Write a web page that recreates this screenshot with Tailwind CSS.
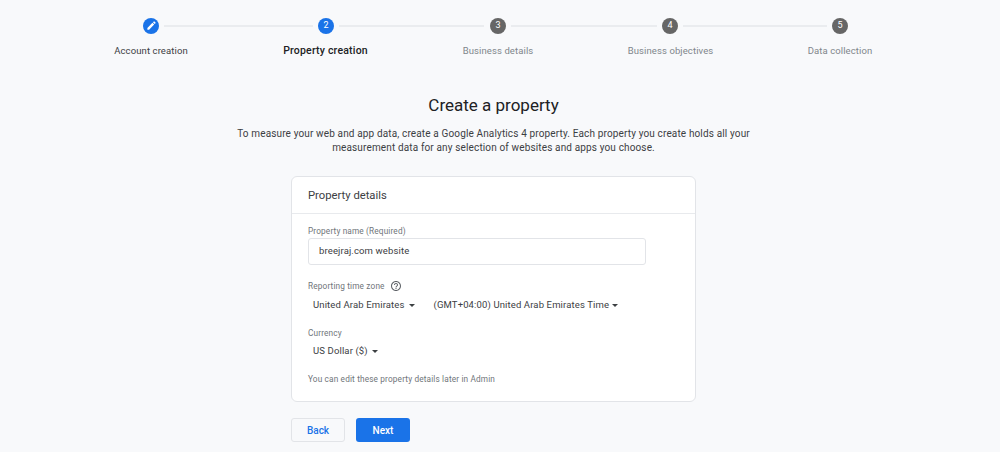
<!DOCTYPE html>
<html lang="en">
<head>
  <meta charset="UTF-8">
  <script src="https://cdn.jsdelivr.net/npm/@tailwindcss/browser@4"></script>
  <title>Create a property</title>
</head>
<body>
  <div class="w-[1000px] h-[452px] overflow-hidden bg-[#f8f9fb] font-['Roboto',sans-serif] text-[#3c4043]">

    <!-- stepper -->
    <div class="flex items-center pl-[143px] pt-[17px] h-[34px]">
      <div class="w-4 h-4 rounded-full bg-[#1a73e8] flex items-center justify-center">
        <svg class="w-[11px] h-[11px]" viewBox="0 0 24 24" fill="#fff"><path d="M3 17.25V21h3.75L17.81 9.94l-3.75-3.75L3 17.25zM20.71 7.04a1 1 0 0 0 0-1.41l-2.34-2.34a1 1 0 0 0-1.41 0l-1.83 1.83 3.75 3.75 1.83-1.83z"/></svg>
      </div>
      <div class="w-[149px] h-[2px] bg-[#eaecef] ml-[5px] mr-[5px]"></div>
      <div class="w-4 h-4 rounded-full bg-[#1a73e8] text-white text-[9px] flex items-center justify-center">2</div>
      <div class="w-[145px] h-[2px] bg-[#eaecef] ml-[5px] mr-[6px]"></div>
      <div class="w-4 h-4 rounded-full bg-[#666666] text-white text-[9px] flex items-center justify-center">3</div>
      <div class="w-[146px] h-[2px] bg-[#eaecef] ml-[5px] mr-[5px]"></div>
      <div class="w-4 h-4 rounded-full bg-[#666666] text-white text-[9px] flex items-center justify-center">4</div>
      <div class="w-[144px] h-[2px] bg-[#eaecef] ml-[5px] mr-[5px]"></div>
      <div class="w-4 h-4 rounded-full bg-[#666666] text-white text-[9px] flex items-center justify-center">5</div>
    </div>
    <div class="flex pl-[91px] pt-[10px] text-[9.5px] leading-[14px] tracking-[0.1px] text-[#80868b] text-center">
      <div class="w-[120px] text-[#3c4043]">Account creation</div>
      <div class="w-[229px] text-[10.5px] tracking-[0.2px] font-medium text-[#202124]">Property creation</div>
      <div class="w-[116px]">Business details</div>
      <div class="w-[229px]">Business objectives</div>
      <div class="w-[110px]">Data collection</div>
    </div>

    <!-- heading -->
    <div class="w-[987px] text-center">
      <h1 class="mt-[35px] text-[17px] leading-[24px] text-[#202124]">Create a property</h1>
      <p class="mt-[10px] mx-auto w-[540px] text-[10px] leading-[14px] tracking-[0.14px]">To measure your web and app data, create a Google Analytics 4 property. Each property you create holds all your measurement data for any selection of websites and apps you choose.</p>
    </div>

    <!-- card -->
    <div class="mt-[21px] ml-[291px] w-[405px] h-[226px] bg-white border border-[#e2e4e8] rounded-[6px]">
      <div class="h-[37px] pl-4 pt-[2px] flex items-center text-[11.25px] text-[#3c4043] border-b border-[#e8eaed]">Property details</div>
      <div class="pl-4">
        <div class="pt-[11px] text-[8.25px] leading-[12px] tracking-[0.15px] text-[#70757a]">Property name (Required)</div>
        <div class="mt-[1px] w-[338px] h-[27px] border border-[#e2e4e8] rounded-[3px] pl-[10px] flex items-center text-[9.5px] tracking-[0.13px]">breejraj.com website</div>

        <div class="mt-[15px] flex items-center gap-[5px] text-[8.25px] leading-[12px] tracking-[0.15px] text-[#70757a]">
          Reporting time zone
          <svg class="w-[12px] h-[12px]" viewBox="0 0 24 24" fill="#5f6368"><path d="M11 18h2v-2h-2v2zm1-16C6.48 2 2 6.48 2 12s4.48 10 10 10 10-4.48 10-10S17.52 2 12 2zm0 18c-4.41 0-8-3.59-8-8s3.59-8 8-8 8 3.59 8 8-3.59 8-8 8zm0-14c-2.21 0-4 1.79-4 4h2c0-1.1.9-2 2-2s2 .9 2 2c0 2-3 1.75-3 5h2c0-2.25 3-2.5 3-5 0-2.21-1.79-4-4-4z"/></svg>
        </div>
        <div class="mt-[6px] flex items-center pl-[5px] text-[9.5px] leading-[14px] tracking-[0.13px]">
          <span>United Arab Emirates</span>
          <span class="ml-[4px] border-x-[3px] border-t-[3px] border-x-transparent border-t-[#3c4043]"></span>
          <span class="ml-[19px]">(GMT+04:00) United Arab Emirates Time</span>
          <span class="ml-[3px] border-x-[3px] border-t-[3px] border-x-transparent border-t-[#3c4043]"></span>
        </div>

        <div class="mt-[15px] text-[8.25px] leading-[12px] tracking-[0.15px] text-[#70757a]">Currency</div>
        <div class="mt-[5px] flex items-center pl-[5px] text-[9.5px] leading-[14px] tracking-[0.13px]">
          <span>US Dollar ($)</span>
          <span class="ml-[4px] border-x-[3px] border-t-[3px] border-x-transparent border-t-[#3c4043]"></span>
        </div>

        <div class="mt-[15px] text-[8.25px] leading-[12px] tracking-[0.15px] text-[#70757a]">You can edit these property details later in Admin</div>
      </div>
    </div>

    <!-- buttons -->
    <div class="mt-[16px] ml-[291px] flex gap-[11px]">
      <button class="w-[54px] h-[24px] border border-[#e2e4e8] rounded-[3px] text-[10px] font-medium text-[#1a73e8]">Back</button>
      <button class="w-[54px] h-[24px] rounded-[3px] bg-[#1a73e8] text-[10px] font-medium text-white">Next</button>
    </div>
  </div>
</body>
</html>
